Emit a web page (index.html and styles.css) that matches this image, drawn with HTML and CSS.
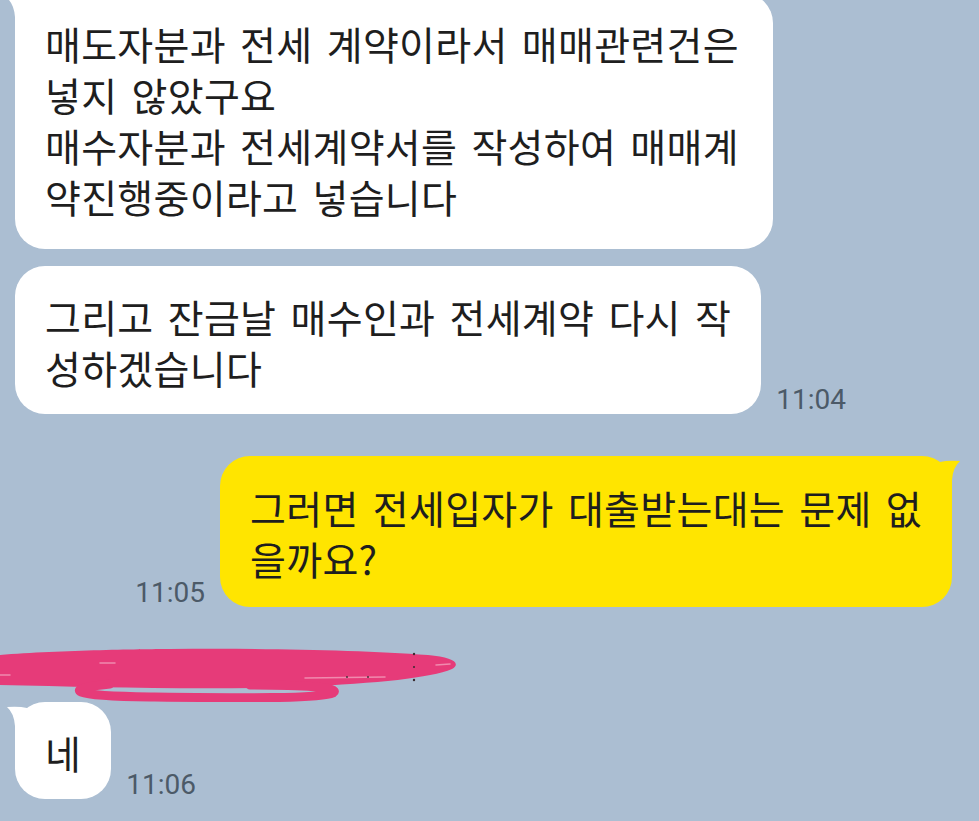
FILE: index.html
```html
<!DOCTYPE html>
<html lang="ko">
<head>
    <meta charset="UTF-8" />
    <meta name="viewport" content="width=device-width, initial-scale=1.0" />
    <title>채팅</title>
    <link rel="stylesheet" href="styles.css">
</head>
<body>
<div class="chat">
    <!-- Received messages -->
    <div class="msg in first">
        <div class="bubble tail">
            <svg class="horn" width="20" height="30" viewBox="-8 0 20 30"><path d="M-8 5 Q4 4 12 6 L12 30 L0 30 L0 24 Q-1 11 -8 5 Z"/></svg>
            매도자분과 전세 계약이라서 매매관련건은<br>
            넣지 않았구요<br>
            매수자분과 전세계약서를 작성하여 매매계<br>
            약진행중이라고 넣습니다
        </div>
    </div>

    <div class="msg in">
        <div class="bubble">
            그리고 잔금날 매수인과 전세계약 다시 작<br>
            성하겠습니다
        </div>
        <span class="time">11:04</span>
    </div>

    <!-- Sent message -->
    <div class="msg out">
        <span class="time">11:05</span>
        <div class="bubble tail">
            <svg class="horn" width="20" height="30" viewBox="-8 0 20 30"><path d="M-8 5 Q4 4 12 6 L12 30 L0 30 L0 24 Q-1 11 -8 5 Z"/></svg>
            그러면 전세입자가 대출받는대는 문제 없<br>
            을까요?
        </div>
    </div>

    <!-- Sender name (scribbled out) -->
    <div class="sender">
        <svg width="470" height="56" viewBox="0 647 470 56">
            <path class="ink" d="M0 656 C60 651 150 650 170 650 C260 649 360 651 428 656 C452 658 462 664 452 670 C430 679 380 684 300 688 C200 691 90 688 0 686 Z"/>
            <path class="loop" d="M110 685 C60 690 70 697 150 698 C240 699 320 700 333 694 C342 688 300 686 250 686"/>
            <path class="streak" d="M305 679 L385 678 M100 664 L115 664 M0 676 L10 676"/>
            <path class="streak" d="M436 666 L450 665"/>
            <circle class="dot" cx="414" cy="655" r="1.2"/>
            <circle class="dot" cx="414" cy="668" r="1"/>
            <circle class="dot" cx="414" cy="681" r="1.2"/>
            <circle class="dot" cx="347" cy="678" r="0.9"/>
            <circle class="dot" cx="368" cy="678" r="0.9"/>
        </svg>
    </div>

    <div class="msg in">
        <div class="bubble tail">
            <svg class="horn" width="20" height="30" viewBox="-8 0 20 30"><path d="M-8 5 Q4 4 12 6 L12 30 L0 30 L0 24 Q-1 11 -8 5 Z"/></svg>
            네
        </div>
        <span class="time">11:06</span>
    </div>
</div>
</body>
</html>
```

FILE: styles.css
```css
html, body {
    margin: 0;
    height: 100%;
    overflow: hidden;
}
body {
    background: #abbed2;
    font-family: 'Noto Sans CJK KR', 'Noto Sans', sans-serif;
    color: #1e1e1e;
}
.chat {
    display: flex;
    flex-direction: column;
    padding: 0 15px;
}
/* One message row: bubble plus time stamp */
.msg {
    display: flex;
    align-items: flex-end;
    gap: 15px;
}
.msg.first {
    margin-top: -7px;
}
.msg.first .bubble {
    padding-bottom: 27px;
    padding-right: 34px;
}
.msg.in + .msg.in {
    margin-top: 17px;
}
.msg.out {
    justify-content: flex-end;
    margin-top: 42px;
    padding-right: 12px;
}
.bubble {
    position: relative;
    background: #fff;
    border-radius: 30px;
    padding: 25px 30px 21px;
    font-size: 39px;
    line-height: 51px;
    letter-spacing: 0.3px;
    word-spacing: 3px;
    white-space: nowrap;
}
.msg.out .bubble {
    background: #ffe500;
    padding-top: 26px;
    padding-bottom: 23px;
}
/* Little horn on the first bubble of a group */
.horn {
    position: absolute;
    top: 0;
    left: -8px;
    fill: #fff;
}
.msg.out .horn {
    left: auto;
    right: -8px;
    transform: scaleX(-1);
    fill: #ffe500;
}
.time {
    font-family: Roboto, 'Noto Sans', sans-serif;
    font-size: 28px;
    line-height: 28px;
    color: #4c5a68;
}
.sender {
    margin: 39px 0 0 -15px;
    height: 56px;
}
.sender svg {
    display: block;
}
.sender .ink {
    fill: #e63b79;
}
.sender .loop {
    fill: none;
    stroke: #e63b79;
    stroke-width: 9;
    stroke-linecap: round;
}
.sender .streak {
    fill: none;
    stroke: #f08aae;
    stroke-width: 1.5;
    stroke-linecap: round;
}
.sender .dot {
    fill: #3a2a30;
}
.msg.in:last-child {
    margin-top: 0;
}
```
